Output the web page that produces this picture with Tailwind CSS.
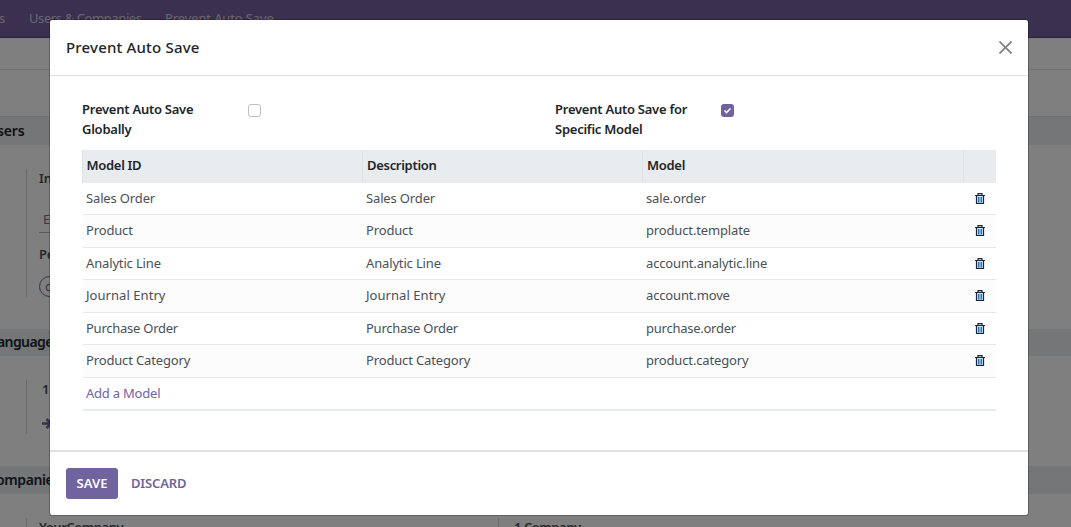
<!DOCTYPE html>
<html lang="en">
<head>
<meta charset="utf-8">
<title>Prevent Auto Save</title>
<script src="https://cdn.jsdelivr.net/npm/@tailwindcss/browser@4"></script>
</head>
<body class="relative h-[527px] w-[1071px] overflow-hidden bg-white font-['Noto_Sans',sans-serif] text-[13px] tracking-[-0.15px] text-[#495057]">
<svg class="hidden">
  <symbol id="trash" viewBox="0 0 10 12"><path d="M2 3v7.4h6V3" fill="#c5e8fb"/><path d="M3.5 4v5.6M5 4v5.6M6.5 4v5.6" stroke="#2f78b5" stroke-width="1"/><path d="M0 2.5h10M3 2V.7h4V2M1.5 3v7.5h7V3" fill="none" stroke="#1b2430" stroke-width="1.2"/></symbol>
</svg>

<div class="flex h-full flex-col">
  <nav class="flex h-[38px] shrink-0 items-center border-b border-[#5a4a80] bg-[#76619f] pb-[2px] text-[13px] leading-[34px] text-[#d2cddd]">
    <span class="-ml-[1px] w-[30px]">s</span>
    <span class="w-[136px] whitespace-nowrap tracking-[-0.4px]">Users &amp; Companies</span>
    <span class="whitespace-nowrap tracking-[-0.12px]">Prevent Auto Save</span>
  </nav>
  <div class="h-[32px] shrink-0 border-b border-[#dee2e6]"></div>
  <div class="h-[46px] shrink-0"></div>
  <h2 class="h-[29px] shrink-0 border-t border-[#dee2e6] bg-[#e9ecef] text-[14px] leading-[27px] font-semibold text-[#212529]"><span class="-ml-[3px]">sers</span></h2>
  <section class="flex h-[184px] shrink-0 pt-[24px] pl-[26px]">
    <div class="h-[128px] w-[300px] border-l border-[#ced4da] pl-3">
      <div class="h-[20px] leading-[18px] font-semibold">In</div>
      <div class="mt-[17px] h-[27px] w-[200px] border-b border-[#adb5bd] pl-1 leading-[27px] text-[#6c757d]">E</div>
      <div class="mt-[12px] h-[20px] leading-[18px] font-semibold">Pe</div>
      <div class="mt-[11px] h-[21px] w-[120px] rounded-full border border-[#71639e] pl-[5px] leading-[18px] text-[#71639e]">d</div>
    </div>
  </section>
  <h2 class="h-[27px] shrink-0 bg-[#e9ecef] text-[14px] leading-[26px] font-semibold text-[#212529]"><span class="-ml-[3px] tracking-[-0.6px]">anguage</span></h2>
  <section class="flex h-[110px] shrink-0 pt-[24px] pl-[26px]">
    <div class="h-[54px] w-[300px] border-l border-[#ced4da] pl-[15px]">
      <div class="h-[20px] leading-[18px] font-semibold">1</div>
      <svg class="mt-[18px] h-[11px] w-[11px]" viewBox="0 0 11 11"><path d="M0 5.5h9M4.5 1l4.5 4.5L4.5 10" fill="none" stroke="#71639e" stroke-width="2.6"/></svg>
    </div>
  </section>
  <h2 class="h-[28px] shrink-0 bg-[#e9ecef] text-[14px] leading-[27px] font-semibold text-[#212529]"><span class="-ml-[4px] tracking-[-0.4px]">ompanie</span></h2>
  <section class="flex h-[33px] shrink-0 pt-[24px] pl-[26px] font-semibold tracking-[-0.45px]">
    <div class="h-[30px] w-[472px] border-l border-[#ced4da] pl-3 leading-[19px]">YourCompany</div>
    <div class="h-[30px] border-l border-[#ced4da] pl-[15px] leading-[19px]">1 Company</div>
  </section>
</div>
<div class="absolute inset-0 bg-black/50"></div>

<div role="dialog" class="absolute top-[19px] left-[49px] flex h-[497px] w-[980px] flex-col rounded-[3px] border border-black/25 bg-white bg-clip-padding">
  <header class="flex h-[56px] shrink-0 items-center justify-between border-b border-[#dee2e6] pr-[16px] pl-4">
    <h1 class="text-[15px] font-medium tracking-[0.18px] text-[#212529]">Prevent Auto Save</h1>
    <svg class="h-[13px] w-[13px]" viewBox="0 0 13 13"><path d="M.5.5l12 12M12.5.5l-12 12" stroke="#808080" stroke-width="1.7"/></svg>
  </header>
  <main class="flex h-[374px] shrink-0 flex-col px-8 pt-[23px]">
    <div class="flex h-[51px] shrink-0 leading-[20px] font-semibold tracking-[-0.25px] text-[#212529]">
      <div class="w-[166px]">Prevent Auto Save<br>Globally</div>
      <div class="w-[307px] pt-[5px]"><div class="h-[13px] w-[13px] rounded-[3px] border border-[#bfbfbf]"></div></div>
      <div class="w-[166px]">Prevent Auto Save for<br>Specific Model</div>
      <div class="pt-[5px]"><div class="flex h-[13px] w-[13px] items-center justify-center rounded-[3px] bg-[#71639e]"><svg class="h-[7px] w-[9px]" viewBox="0 0 9 7"><path d="M1.5 3.5l2 2 4-4" fill="none" stroke="#fff" stroke-width="1.6"/></svg></div></div>
    </div>
    <div class="grid h-[33px] shrink-0 grid-cols-[280px_280px_321px_33px] bg-[#e9ecef] leading-[31px] font-semibold tracking-[-0.3px] text-[#212529]">
      <div class="mb-px border-l border-[#dee2e6] pl-[3.5px]">Model ID</div><div class="mb-px border-l border-[#dee2e6] pl-1">Description</div><div class="mb-px border-l border-[#dee2e6] pl-1">Model</div><div class="mb-px border-l border-[#dee2e6]"></div>
    </div>
    <div class="ml-px">
      <div class="grid h-[32px] grid-cols-[280px_280px_321px_32px] items-center border-b border-[#e5e7ea] pl-[3px]"><span>Sales Order</span><span>Sales Order</span><span>sale.order</span><svg class="ml-[8px] h-3 w-[10px]"><use href="#trash"/></svg></div>
      <div class="grid h-[33px] grid-cols-[280px_280px_321px_32px] items-center border-b border-[#e5e7ea] bg-[#fcfcfc] pl-[3px]"><span>Product</span><span>Product</span><span>product.template</span><svg class="ml-[8px] h-3 w-[10px]"><use href="#trash"/></svg></div>
      <div class="grid h-[32px] grid-cols-[280px_280px_321px_32px] items-center border-b border-[#e5e7ea] pl-[3px]"><span>Analytic Line</span><span>Analytic Line</span><span>account.analytic.line</span><svg class="ml-[8px] h-3 w-[10px]"><use href="#trash"/></svg></div>
      <div class="grid h-[33px] grid-cols-[280px_280px_321px_32px] items-center border-b border-[#e5e7ea] bg-[#fcfcfc] pl-[3px]"><span class="tracking-[0.05px]">Journal Entry</span><span class="tracking-[0.05px]">Journal Entry</span><span>account.move</span><svg class="ml-[8px] h-3 w-[10px]"><use href="#trash"/></svg></div>
      <div class="grid h-[32px] grid-cols-[280px_280px_321px_32px] items-center border-b border-[#e5e7ea] pl-[3px] tracking-[-0.25px]"><span>Purchase Order</span><span>Purchase Order</span><span>purchase.order</span><svg class="ml-[8px] h-3 w-[10px]"><use href="#trash"/></svg></div>
      <div class="grid h-[33px] grid-cols-[280px_280px_321px_32px] items-center border-b border-[#e5e7ea] bg-[#fcfcfc] pl-[3px]"><span>Product Category</span><span>Product Category</span><span>product.category</span><svg class="ml-[8px] h-3 w-[10px]"><use href="#trash"/></svg></div>
      <div class="flex h-[33px] items-center border-b-2 border-[#e9ecef] pl-[3px] tracking-[-0.22px] text-[#71639e]"><span>Add a Model</span></div>
    </div>
  </main>
  <footer class="flex h-[65px] shrink-0 items-center border-t-2 border-[#dee2e6] pl-4 text-[13px] font-semibold">
    <button class="h-[31px] w-[52px] rounded-[3px] bg-[#71639e] tracking-[0.1px] text-white">SAVE</button>
    <button class="ml-[13px] text-[#71639e]">DISCARD</button>
  </footer>
</div>
</body>
</html>
